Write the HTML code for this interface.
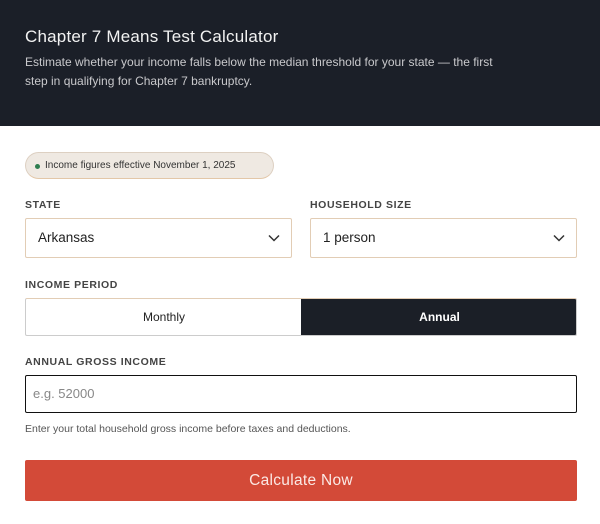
<!DOCTYPE html>
<html><head><meta charset="utf-8"><style>
*{box-sizing:border-box;margin:0;padding:0}
body{width:600px;height:524px;background:#fff;font-family:"Liberation Sans",sans-serif;position:relative;overflow:hidden;color:#1b1f27}
.hdr{position:absolute;left:0;top:0;width:600px;height:126px;background:#1b1f28}
.t{position:absolute;left:25px;top:27px;font-size:17px;color:#f2f2f2;letter-spacing:.2px}
.s{position:absolute;left:25px;top:53px;font-size:12px;line-height:19px;color:#c9c9cc;width:490px}
.badge{position:absolute;left:25px;top:152px;width:249px;height:27px;border-radius:14px;background:#efe9e2;border:1px solid #ddd0c2;border-bottom-color:#e3c7a8;font-size:10px;color:#333;line-height:25px;padding-left:19px}
.badge:before{content:"";position:absolute;left:9px;top:11px;width:5px;height:5px;border-radius:50%;background:#2e7d4f}
.lbl{position:absolute;font-size:10.5px;font-weight:bold;letter-spacing:.6px;color:#444}
.sel{position:absolute;top:218px;height:40px;border:1px solid #e2cdb5;border-radius:2px;font-size:13.5px;line-height:38px;padding-left:12px;color:#222}
.sel svg{position:absolute;right:11px;top:15px}
.tog{position:absolute;left:25px;top:298px;width:552px;height:38px;border:1px solid #ccc;border-top-color:#e2cdb5;border-radius:2px;overflow:hidden}
.tog div{position:absolute;top:0;height:36px;line-height:36px;text-align:center;font-size:12px}
.inp{position:absolute;left:25px;top:375px;width:552px;height:38px;border:1px solid #111;border-radius:2px;font-size:13px;color:#888;line-height:36px;padding-left:7px}
.help{position:absolute;left:25px;top:421px;font-size:10.5px;color:#555}
.btn{position:absolute;left:25px;top:460px;width:552px;height:41px;background:#d34a38;border-radius:2px;color:#fbe9e5;font-size:15.5px;text-align:center;line-height:41px;letter-spacing:.3px}
</style></head><body>
<div class="hdr">
<div class="t">Chapter 7 Means Test Calculator</div>
<div class="s">Estimate whether your income falls below the median threshold for your state — the first step in qualifying for Chapter 7 bankruptcy.</div>
</div>
<div class="badge">Income figures effective November 1, 2025</div>
<div class="lbl" style="left:25px;top:199px">STATE</div>
<div class="lbl" style="left:310px;top:199px">HOUSEHOLD SIZE</div>
<div class="sel" style="left:25px;width:267px">Arkansas<svg width="12" height="8" viewBox="0 0 12 8"><path d="M1 1.5l5 5 5-5" fill="none" stroke="#333" stroke-width="1.5"/></svg></div>
<div class="sel" style="left:310px;width:267px">1 person<svg width="12" height="8" viewBox="0 0 12 8"><path d="M1 1.5l5 5 5-5" fill="none" stroke="#333" stroke-width="1.5"/></svg></div>
<div class="lbl" style="left:25px;top:279px">INCOME PERIOD</div>
<div class="tog"><div style="left:0;width:276px;color:#222">Monthly</div><div style="left:275px;width:277px;background:#1b1f27;color:#fff;font-weight:bold">Annual</div></div>
<div class="lbl" style="left:25px;top:356px">ANNUAL GROSS INCOME</div>
<div class="inp">e.g. 52000</div>
<div class="help" style="top:423px">Enter your total household gross income before taxes and deductions.</div>
<div class="btn">Calculate Now</div>
</body></html>
